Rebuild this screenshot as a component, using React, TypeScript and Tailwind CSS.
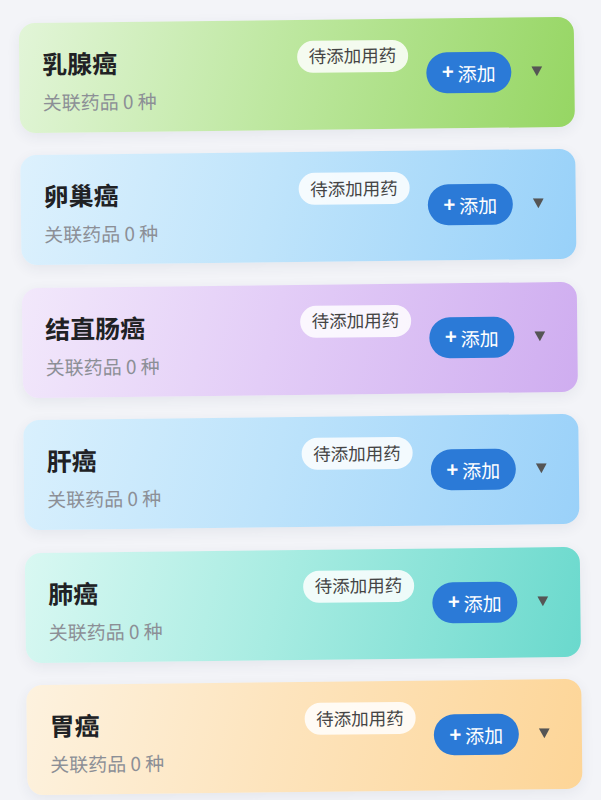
import React from 'react';

interface Disease {
  id: string;
  name: string;
  count: number;
  bg: string;
}

// card gradients go light at the left to saturated at the right
const diseases: Disease[] = [
  { id: '1', name: '乳腺癌', count: 0, bg: 'bg-[linear-gradient(105deg,#e2f5d8_0%,#bfe8a2_45%,#96d663_100%)]' },
  { id: '2', name: '卵巢癌', count: 0, bg: 'bg-[linear-gradient(105deg,#ddf1fd_0%,#bfe4fb_45%,#98d1f9_100%)]' },
  { id: '3', name: '结直肠癌', count: 0, bg: 'bg-[linear-gradient(105deg,#f2e8fb_0%,#e3cdf7_45%,#cfadf0_100%)]' },
  { id: '4', name: '肝癌', count: 0, bg: 'bg-[linear-gradient(105deg,#d9f0fd_0%,#bde3fb_45%,#9ad1f9_100%)]' },
  { id: '5', name: '肺癌', count: 0, bg: 'bg-[linear-gradient(105deg,#d9f8f2_0%,#a8ece2_45%,#6ad9cd_100%)]' },
  { id: '6', name: '胃癌', count: 0, bg: 'bg-[linear-gradient(105deg,#fdf2df_0%,#fde4bd_45%,#fdd597_100%)]' },
];

const DiseaseCard = ({ disease }: { disease: Disease }) => {
  return (
    <div
      className={`flex items-start h-[110px] rounded-[16px] pl-[23px] pr-[32px] shadow-[0_4px_14px_rgba(40,50,80,0.07)] ${disease.bg}`}
    >
      <div className="flex-1 flex flex-col pt-[24px]">
        <div className="text-[25px] leading-[32px] font-bold text-[#202124]">{disease.name}</div>
        <div className="mt-[11px] text-[19px] leading-[24px] text-[#8c8f96]">
          关联药品 {disease.count} 种
        </div>
      </div>

      <div className="mt-[21px] h-[32px] px-[12px] flex items-center rounded-full bg-white/85 text-[17.5px] text-[#444] whitespace-nowrap">
        待添加用药
      </div>

      <button className="ml-[18px] mt-[34px] h-[41px] w-[85px] flex items-center justify-center gap-[4px] rounded-full bg-[#2b7ad7] text-white">
        <span className="text-[20px] font-bold leading-none -mt-[2px]">+</span>
        <span className="text-[19px] leading-none">添加</span>
      </button>

      <svg className="ml-[20px] mt-[49px]" width="11" height="10" viewBox="0 0 11 10">
        <polygon points="0,0 11,0 5.5,10" fill="#555" />
      </svg>
    </div>
  );
};

const App = () => {
  return (
    <div className="w-[601px] h-[800px] overflow-hidden bg-[#f3f4f8] font-['Noto_Sans_CJK_SC','Noto_Sans',sans-serif]">
      <div className="flex flex-col gap-[22.5px] pt-[19.5px] px-[23px] rotate-[-0.65deg]">
        {diseases.map(d => (
          <DiseaseCard key={d.id} disease={d} />
        ))}
      </div>
    </div>
  );
};

export default App;
